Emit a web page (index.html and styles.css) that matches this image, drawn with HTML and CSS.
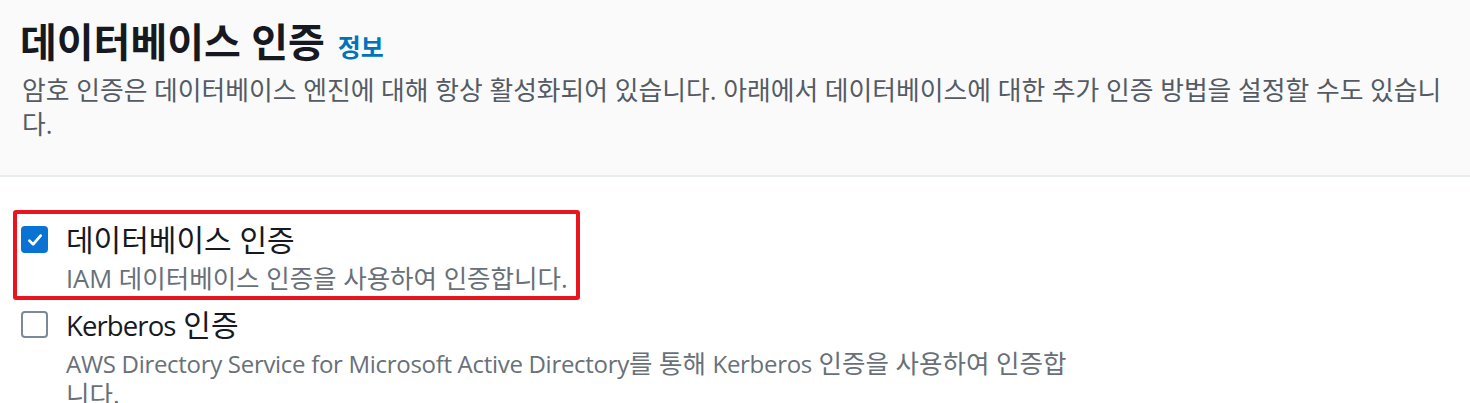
FILE: index.html
```html
<!DOCTYPE html>
<html lang="ko">
<head>
<meta charset="utf-8">
<link rel="stylesheet" href="styles.css">
</head>
<body>
<div class="panel">
  <header class="panel-header">
    <div class="title-row">
      <h2 class="title">데이터베이스 인증</h2>
      <a class="info-link" href="#">정보</a>
    </div>
    <p class="desc">암호 인증은 데이터베이스 엔진에 대해 항상 활성화되어 있습니다. 아래에서 데이터베이스에 대한 추가 인증 방법을 설정할 수도 있습니다.</p>
  </header>
  <div class="panel-body">
    <div class="highlight">
      <label class="option">
        <span class="box checked">
          <svg viewBox="0 0 16 16" width="20" height="20"><path d="M3.5 8.5 L6.5 11.5 L12.5 4.5" fill="none" stroke="#fff" stroke-width="2.2" stroke-linecap="round" stroke-linejoin="round"/></svg>
        </span>
        <span class="option-text">
          <span class="option-label">데이터베이스 인증</span>
          <span class="option-desc">IAM 데이터베이스 인증을 사용하여 인증합니다.</span>
        </span>
      </label>
    </div>
    <label class="option plain">
      <span class="box"></span>
      <span class="option-text">
        <span class="option-label"><span class="en">Kerberos</span> 인증</span>
        <span class="option-desc wide"><span class="en">AWS Directory Service for Microsoft Active Directory</span>를 통해 <span class="en">Kerberos</span> 인증을 사용하여 인증합니다.</span>
      </span>
    </label>
  </div>
</div>
</body>
</html>
```
FILE: styles.css
```css
html, body {
  margin: 0;
  padding: 0;
  background: #ffffff;
}
body {
  font-family: "Open Sans", "Noto Sans CJK KR", sans-serif;
  color: #16191f;
  width: 1470px;
  height: 403px;
  overflow: hidden;
}
.panel-header {
  box-sizing: border-box;
  height: 177px;
  background: #fafafa;
  border-bottom: 2px solid #eaeded;
  padding: 19px 20px 0 20px;
}
.title-row {
  display: flex;
  align-items: baseline;
  gap: 13px;
}
.title {
  margin: 0;
  font-size: 40px;
  font-weight: 700;
  line-height: 46px;
  color: #16191f;
}
.info-link {
  font-size: 25px;
  font-weight: 700;
  color: #0073bb;
  text-decoration: none;
}
.desc {
  margin: 8px 0 0 2px;
  font-size: 25.8px;
  line-height: 34px;
  color: #545b64;
}
.panel-body {
  padding: 33px 0 0 13px;
}
.highlight {
  width: fit-content;
  border: 4px solid #e8151f;
  border-radius: 3px;
  padding: 9px 8px 3px 4px;
}
.option {
  display: flex;
  gap: 18px;
  align-items: flex-start;
}
.option.plain {
  padding: 8px 0 0 8px;
}
.box {
  flex: none;
  width: 27px;
  height: 27px;
  box-sizing: border-box;
  border: 2px solid #7d8998;
  border-radius: 4px;
  margin-top: 3px;
  display: flex;
  align-items: center;
  justify-content: center;
}
.box.checked {
  background: #0972d3;
  border-color: #0972d3;
}
.option-text {
  display: flex;
  flex-direction: column;
}
.option-label {
  font-size: 30px;
  line-height: 34px;
  color: #16191f;
}
.option-label .en {
  font-size: 27.5px;
  letter-spacing: -0.9px;
}
.option-desc {
  font-size: 25.5px;
  line-height: 30px;
  color: #687078;
  margin-top: 6px;
}
.option-desc .en {
  font-size: 24px;
  letter-spacing: -0.3px;
}
.option-desc.wide {
  margin-top: 5px;
  max-width: 1016px;
}
```
